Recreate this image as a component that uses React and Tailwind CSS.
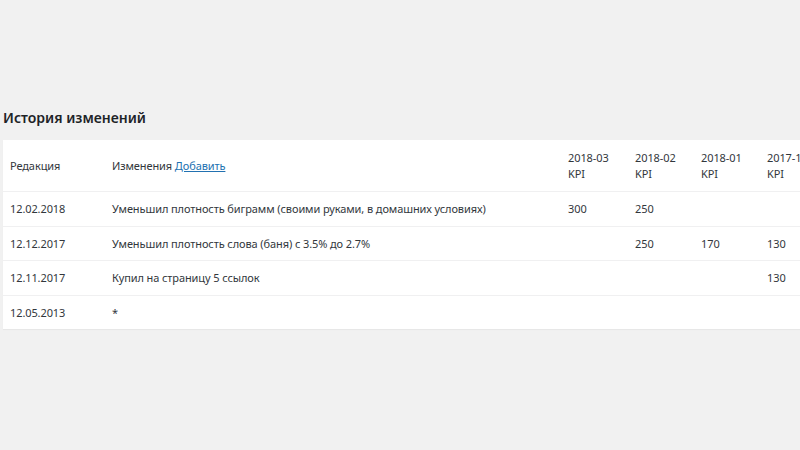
const kpiCols = ['2018-03', '2018-02', '2018-01', '2017-12', '2017-11', '2017-10']

const rows = [
  { date: '12.02.2018', text: 'Уменьшил плотность биграмм (своими руками, в домашних условиях)', kpi: ['300', '250', '', '', '', ''] },
  { date: '12.12.2017', text: 'Уменьшил плотность слова (баня) с 3.5% до 2.7%', kpi: ['', '250', '170', '130', '', ''] },
  { date: '12.11.2017', text: 'Купил на страницу 5 ссылок', kpi: ['', '', '', '130', '', ''] },
  { date: '12.05.2013', text: '*', kpi: ['', '', '', '', '', ''] },
]

export default function App() {
  return (
    <div
      className="w-[800px] h-[450px] overflow-hidden bg-[#f1f1f1] text-[#32373c]"
      style={{ fontFamily: '"Noto Sans", "Open Sans", sans-serif' }}
    >
      <div className="pt-[107px] pl-[3px]">
        <h2 className="text-[14px] leading-[22px] font-semibold text-[#1d2327] m-0">История изменений</h2>
        <table className="mt-[11px] bg-white border-collapse table-fixed text-[11px] tracking-[-0.1px] w-[954px] shadow-[0_1px_1px_rgba(0,0,0,0.04)]">
          <colgroup>
            <col className="w-[101px]" />
            <col className="w-[456px]" />
            <col className="w-[67px]" />
            {kpiCols.slice(1).map((c) => (
              <col key={c} className="w-[66px]" />
            ))}
          </colgroup>
          <thead>
            <tr className="border-b border-[#f0f0f1] leading-[16px]">
              <th className="text-left font-normal px-[7px] pt-[10px] pb-[9px] align-middle">Редакция</th>
              <th className="text-left font-normal px-[8px] pt-[10px] pb-[9px] align-middle">
                Изменения{' '}
                <a href="#" className="text-[#2271b1] underline">Добавить</a>
              </th>
              {kpiCols.map((c) => (
                <th key={c} className="text-left font-normal px-[8px] pt-[10px] pb-[9px] whitespace-nowrap overflow-hidden">
                  {c}
                  <br />
                  KPI
                </th>
              ))}
            </tr>
          </thead>
          <tbody className="leading-[17.6px]">
            {rows.map((r, i) => (
              <tr key={r.date} className={i < rows.length - 1 ? 'border-b border-[#f0f0f1]' : ''}>
                <td className="px-[7px] py-[8px]">{r.date}</td>
                <td className="px-[8px] py-[8px] whitespace-nowrap">{r.text}</td>
                {r.kpi.map((k, j) => (
                  <td key={j} className="px-[8px] py-[8px]">{k}</td>
                ))}
              </tr>
            ))}
          </tbody>
        </table>
      </div>
    </div>
  )
}
